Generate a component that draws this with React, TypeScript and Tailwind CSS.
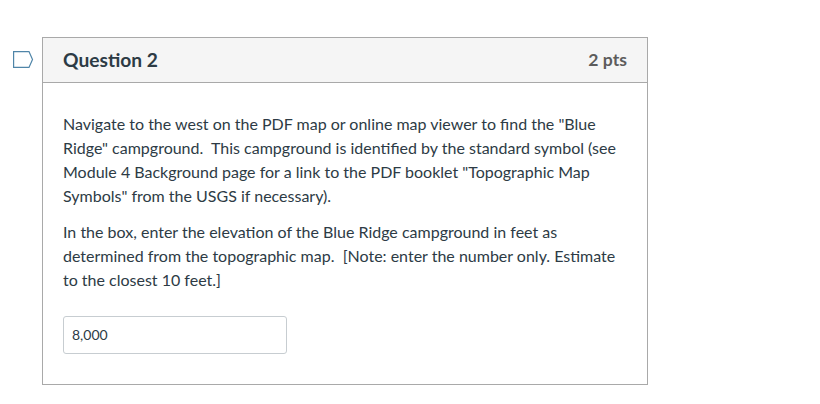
import React from 'react';

const App: React.FC = () => {
  return (
    <div className="min-h-[404px] bg-white pt-[37px] pl-[42px] font-['Lato',sans-serif] text-[#2d3b45]">
      <div className="relative w-[606px] border border-[#a9a9a9]">
        {/* Bookmark flag */}
        <svg className="absolute left-[-30px] top-[13px]" width="22" height="18" viewBox="0 0 22 18" fill="none">
          <path d="M0.6 0.6H16L19.5 8.5L16 16.4H0.6Z" fill="#fff" stroke="#4f85a8" strokeWidth="1.2" />
        </svg>

        {/* Header */}
        <div className="flex h-[45px] items-center justify-between border-b border-[#a9a9a9] bg-[#f5f5f5] pl-5 pr-5">
          <div className="text-[19.2px] font-bold">Question 2</div>
          <div className="text-[17.6px] font-bold text-[#5c5c5c]">2 pts</div>
        </div>

        {/* Body */}
        <div className="px-5 pt-[29px] pb-[30px] text-base leading-6">
          <p className="mb-3">
            Navigate to the west on the PDF map or online map viewer to find the "Blue Ridge" campground.&nbsp; This
            campground is identified by the standard symbol (see Module 4 Background page for a link to the PDF booklet
            "Topographic Map Symbols" from the USGS if necessary).
          </p>
          <p>
            In the box, enter the elevation of the Blue Ridge campground in feet as determined from the topographic
            map.&nbsp; [Note: enter the number only. Estimate to the closest 10 feet.]
          </p>
          <input
            readOnly
            value="8,000"
            className="mt-6 block h-[38px] w-[224px] rounded-[3px] border border-[#c7cdd1] bg-white px-2 pb-[2px] text-sm text-[#2d3b45] outline-none"
          />
        </div>
      </div>
    </div>
  );
};

export default App;
